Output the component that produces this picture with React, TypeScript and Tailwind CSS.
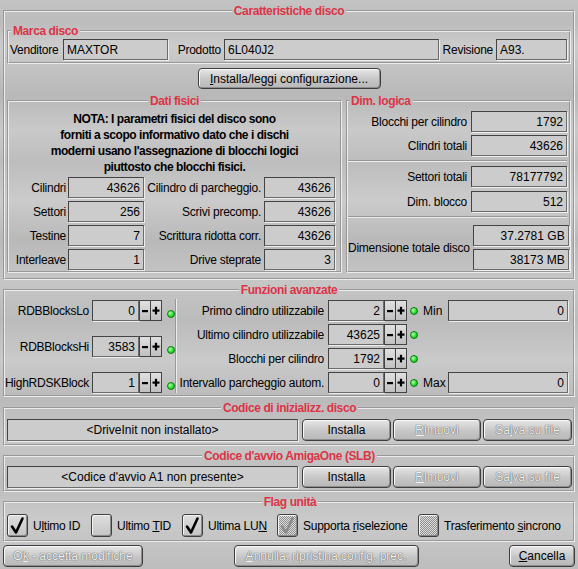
import React from "react";

type Kids = { children?: React.ReactNode; className?: string };

const FIELD =
  "h-[21px] flex items-center bg-[#cccccc] border border-t-[#444444] border-l-[#444444] border-b-[#6c6c6c] border-r-[#6c6c6c] shadow-[1px_1px_0_#eeeeee] px-[3px] text-[12px] leading-[14px] text-black whitespace-nowrap overflow-hidden";

function Field({ value, className = "", align = "right" }: { value: string; className?: string; align?: "left" | "right" | "center" }) {
  const j = align === "left" ? "justify-start" : align === "center" ? "justify-center" : "justify-end";
  return <div className={`${FIELD} ${j} ${className}`}>{value}</div>;
}

function Label({ children, className = "" }: Kids) {
  return (
    <div className={`flex justify-end whitespace-nowrap text-[12px] leading-[14px] tracking-[-0.25px] text-black ${className}`}>
      {children}
    </div>
  );
}

function Group({ title, left = false, className = "", children }: Kids & { title: string; left?: boolean }) {
  return (
    <fieldset className={`min-w-0 border-2 [border-style:groove] border-[#ececec] ${className}`}>
      <legend
        className={`${left ? "ml-[1px]" : "mx-auto"} px-[2px] text-[12px] leading-[14px] font-bold tracking-[-0.4px] text-[#dd3447]`}
      >
        {title}
      </legend>
      {children}
    </fieldset>
  );
}

function Btn({ children, disabled = false, className = "" }: Kids & { disabled?: boolean }) {
  return (
    <button
      type="button"
      className={`flex items-center justify-center rounded-[4px] border border-[#3e3e3e] bg-[linear-gradient(180deg,#e6e6e6,#c6c6c6_55%,#b8b8b8)] shadow-[inset_1px_1px_0_#f8f8f8,inset_-1px_-1px_0_#8e8e8e] text-[12px] leading-[14px] whitespace-nowrap ${
        disabled ? "text-[#eeeeee] [text-shadow:0_0_1px_#5e5e5e,0_0_1px_#5e5e5e]" : "text-black"
      } ${className}`}
    >
      {children}
    </button>
  );
}

function Led() {
  return (
    <div className="w-[8px] h-[8px] rounded-full border border-[#0d7a12] bg-[radial-gradient(circle_at_35%_35%,#b8ffb0,#22e02a_55%,#13a81a)]" />
  );
}

function Spin({ value, w }: { value: string; w: string }) {
  return (
    <div className="flex h-[21px]">
      <Field value={value} className={w} />
      <div className="w-[12px] h-[21px] flex items-center justify-center border border-[#444444] bg-[linear-gradient(180deg,#e0e0e0,#c0c0c0)]">
        <svg width="8" height="8" viewBox="0 0 8 8">
          <rect x="1" y="3" width="6" height="2.2" fill="#000" />
        </svg>
      </div>
      <div className="w-[11px] h-[21px] flex items-center justify-center border border-l-0 border-[#444444] bg-[linear-gradient(180deg,#e0e0e0,#c0c0c0)]">
        <svg width="8" height="9" viewBox="0 0 8 9">
          <rect x="0.5" y="3.5" width="7" height="2.2" fill="#000" />
          <rect x="2.9" y="0.8" width="2.2" height="7.6" fill="#000" />
        </svg>
      </div>
    </div>
  );
}

function Check({ checked = false, disabled = false }: { checked?: boolean; disabled?: boolean }) {
  return (
    <div
      className={`w-[21px] h-[23px] shrink-0 flex items-center justify-center rounded-[3px] border border-[#404040] shadow-[inset_1px_1px_0_#f4f4f4,inset_-1px_-1px_0_#8a8a8a] ${
        disabled
          ? "bg-[repeating-conic-gradient(#8e8e8e_0_25%,#dedede_0_50%)] bg-[length:2px_2px]"
          : "bg-[linear-gradient(180deg,#dedede,#c4c4c4)]"
      }`}
    >
      {checked && (
        <svg width="17" height="19" viewBox="0 0 17 19">
          <path
            d="M3 10.5 L7 16.5 L13.5 2.5"
            fill="none"
            stroke={disabled ? "#8a8a8a" : "#000"}
            strokeWidth="2.6"
            strokeLinecap="round"
            strokeLinejoin="round"
          />
        </svg>
      )}
    </div>
  );
}

function Flag({ checked, disabled, w, children }: Kids & { checked?: boolean; disabled?: boolean; w: string }) {
  return (
    <div className={`flex items-center shrink-0 ${w}`}>
      <Check checked={checked} disabled={disabled} />
      <span className="ml-[5px] text-[12px] leading-[14px] tracking-[-0.25px] whitespace-nowrap">{children}</span>
    </div>
  );
}

function Sep() {
  return <div className="border-t-2 [border-style:groove] border-[#ececec]" />;
}

export default function App() {
  const physRows = [
    ["Cilindri", "43626", "Cilindro di parcheggio.", "43626"],
    ["Settori", "256", "Scrivi precomp.", "43626"],
    ["Testine", "7", "Scrittura ridotta corr.", "43626"],
    ["Interleave", "1", "Drive steprate", "3"],
  ];

  const rightRows: [string, string, string][] = [
    ["Primo clindro utilizzabile", "2", "Min"],
    ["Ultimo cilindro utilizzabile", "43625", ""],
    ["Blocchi per cilindro", "1792", ""],
    ["Intervallo parcheggio autom.", "0", "Max"],
  ];

  return (
    <div className="w-[578px] h-[569px] overflow-hidden px-[3px] pt-[4px] font-['Liberation_Sans',Arial,sans-serif] text-black bg-[linear-gradient(180deg,#c3c3c3_0px,#bcbcbc_22px,#cccccc_46px,#c1c1c1_72px,#b8b8b8_96px,#c9c9c9_130px,#bdbdbd_162px,#cbcbcb_200px,#b9b9b9_240px,#c6c6c6_282px,#bbbbbb_320px,#cacaca_360px,#bababa_400px,#c8c8c8_440px,#bcbcbc_480px,#cacaca_520px,#bdbdbd_569px)]">
      {/* Caratteristiche disco */}
      <Group title="Caratteristiche disco" className="px-[2px] pt-[6px] pb-[5px]">
        <Group title="Marca disco" left className="pt-[1px] pb-[2px] pl-[1px] pr-[2px]">
          <div className="flex items-center">
            <div className="w-[53px] text-[12px] leading-[14px] tracking-[-0.25px]">Venditore</div>
            <Field value="MAXTOR" align="left" className="w-[105px]" />
            <Label className="w-[56px] pr-[3px]">Prodotto</Label>
            <Field value="6L040J2" align="left" className="flex-1" />
            <Label className="w-[57px] pr-[3px]">Revisione</Label>
            <Field value="A93." align="left" className="w-[71px]" />
          </div>
        </Group>

        <div className="flex justify-center mt-[4px]">
          <Btn className="w-[183px] h-[21px]">
            <span>
              <u>I</u>nstalla/leggi configurazione...
            </span>
          </Btn>
        </div>

        <div className="flex gap-[4px] mt-[5px]">
          <Group title="Dati fisici" className="w-[335px] pb-[1px]">
            <div className="mt-[3px] text-center text-[12px] leading-[16px] font-bold tracking-[-0.45px]">
              <div>NOTA: I parametri fisici del disco sono</div>
              <div>forniti a scopo informativo dato che i dischi</div>
              <div>moderni usano l'assegnazione di blocchi logici</div>
              <div>piuttosto che blocchi fisici.</div>
            </div>
            <div className="mt-[2px] flex flex-col gap-[3px]">
              {physRows.map(([a, av, b, bv]) => (
                <div key={a} className="flex items-center">
                  <Label className="w-[57px]">{a}</Label>
                  <Field value={av} className="w-[76px] ml-[2px]" />
                  <Label className="w-[120px] pr-[3px]">{b}</Label>
                  <Field value={bv} className="w-[71px]" />
                </div>
              ))}
            </div>
          </Group>

          <Group title="Dim. logica" left className="flex-1 pr-[2px]">
            <div className="flex items-center mt-[3px]">
              <Label className="flex-1 pr-[4px]">Blocchi per cilindro</Label>
              <Field value="1792" className="w-[96px]" />
            </div>
            <div className="flex items-center mt-[3px]">
              <Label className="flex-1 pr-[4px]">Clindri totali</Label>
              <Field value="43626" className="w-[96px]" />
            </div>
            <div className="mt-[4px]">
              <Sep />
            </div>
            <div className="flex items-center mt-[4px]">
              <Label className="flex-1 pr-[4px]">Settori totali</Label>
              <Field value="78177792" className="w-[96px]" />
            </div>
            <div className="flex items-center mt-[4px]">
              <Label className="flex-1 pr-[4px]">Dim. blocco</Label>
              <Field value="512" className="w-[96px]" />
            </div>
            <div className="mt-[4px]">
              <Sep />
            </div>
            <div className="flex items-center mt-[7px]">
              <Label className="flex-1 pr-[3px]">Dimensione totale disco</Label>
              <div className="flex flex-col gap-[3px]">
                <Field value="37.2781 GB" className="w-[96px]" />
                <Field value="38173 MB" className="w-[96px]" />
              </div>
            </div>
          </Group>
        </div>
      </Group>

      {/* Funzioni avanzate */}
      <Group title="Funzioni avanzate" className="mt-[3px] pt-[3px] pb-[2px]">
        <div className="flex h-[93px]">
          <div className="w-[170px] flex flex-col justify-between">
            {[
              ["RDBBlocksLo", "0"],
              ["RDBBlocksHi", "3583"],
              ["HighRDSKBlock", "1"],
            ].map(([l, v]) => (
              <div key={l} className="flex items-center">
                <Label className="w-[84px] mr-[3px]">{l}</Label>
                <Spin value={v} w="w-[47px]" />
                <div className="ml-[5px] mt-[6px]">
                  <Led />
                </div>
              </div>
            ))}
          </div>
          <div className="w-0 border-l-2 [border-style:groove] border-[#ececec] mt-[-1px]" />
          <div className="flex-1 flex flex-col gap-[3px]">
            {rightRows.map(([l, v, extra]) => (
              <div key={l} className="flex items-center">
                <Label className="flex-1 pr-[4px]">{l}</Label>
                <Spin value={v} w="w-[56px]" />
                <div className="ml-[3px]">
                  <Led />
                </div>
                <div className="w-[155px] flex items-center pl-[5px] pr-[5px]">
                  {extra && (
                    <>
                      <span className="text-[12px] leading-[14px]">{extra}</span>
                      <Field value="0" className="w-[120px] ml-auto" />
                    </>
                  )}
                </div>
              </div>
            ))}
          </div>
        </div>
      </Group>

      {/* Codice di inizializzazione */}
      <Group title="Codice di inizializz. disco" className="mt-[4px] pt-[4px] pb-[3px] pl-[2px] pr-[1px]">
        <div className="flex">
          <Field value="<DriveInit non installato>" align="center" className="flex-1 h-[22px]" />
          <Btn className="w-[89px] h-[22px] ml-[4px]">Installa</Btn>
          <Btn disabled className="w-[88px] h-[22px] ml-[2px]">
            <span>
              <u>R</u>imuovi
            </span>
          </Btn>
          <Btn disabled className="w-[89px] h-[22px] ml-[2px]">
            <span>
              Sa<u>l</u>va su file
            </span>
          </Btn>
        </div>
      </Group>

      {/* Codice d'avvio */}
      <Group title="Codice d'avvio AmigaOne (SLB)" className="mt-[3px] pt-[3px] pb-[2px] pl-[2px] pr-[1px]">
        <div className="flex">
          <Field value="<Codice d'avvio A1 non presente>" align="center" className="flex-1 h-[22px]" />
          <Btn className="w-[89px] h-[22px] ml-[4px]">Installa</Btn>
          <Btn disabled className="w-[88px] h-[22px] ml-[2px]">
            <span>
              <u>R</u>imuovi
            </span>
          </Btn>
          <Btn disabled className="w-[89px] h-[22px] ml-[2px]">
            <span>
              Sa<u>l</u>va su file
            </span>
          </Btn>
        </div>
      </Group>

      {/* Flag unità */}
      <Group title="Flag unità" className="mt-[3px] pt-[5px] pb-[3px] pl-[2px]">
        <div className="flex items-center">
          <Flag checked w="w-[84px]">
            U<u>l</u>timo ID
          </Flag>
          <Flag w="w-[91px]">
            Ultimo <u>T</u>ID
          </Flag>
          <Flag checked w="w-[95px]">
            Ultima LU<u>N</u>
          </Flag>
          <Flag checked disabled w="w-[141px]">
            Supporta <u>r</u>iselezione
          </Flag>
          <Flag disabled w="w-[150px]">
            Trasferimento <u>s</u>incrono
          </Flag>
        </div>
      </Group>

      {/* Pulsanti */}
      <div className="flex justify-between mt-[3px]">
        <Btn disabled className="w-[140px] h-[22px]">
          <span>
            O<u>k</u> - accetta modifiche
          </span>
        </Btn>
        <Btn disabled className="w-[185px] h-[22px]">
          <span>
            <u>A</u>nnulla: ripristina config. prec.
          </span>
        </Btn>
        <Btn className="w-[66px] h-[22px]">
          <span>
            <u>C</u>ancella
          </span>
        </Btn>
      </div>
    </div>
  );
}
